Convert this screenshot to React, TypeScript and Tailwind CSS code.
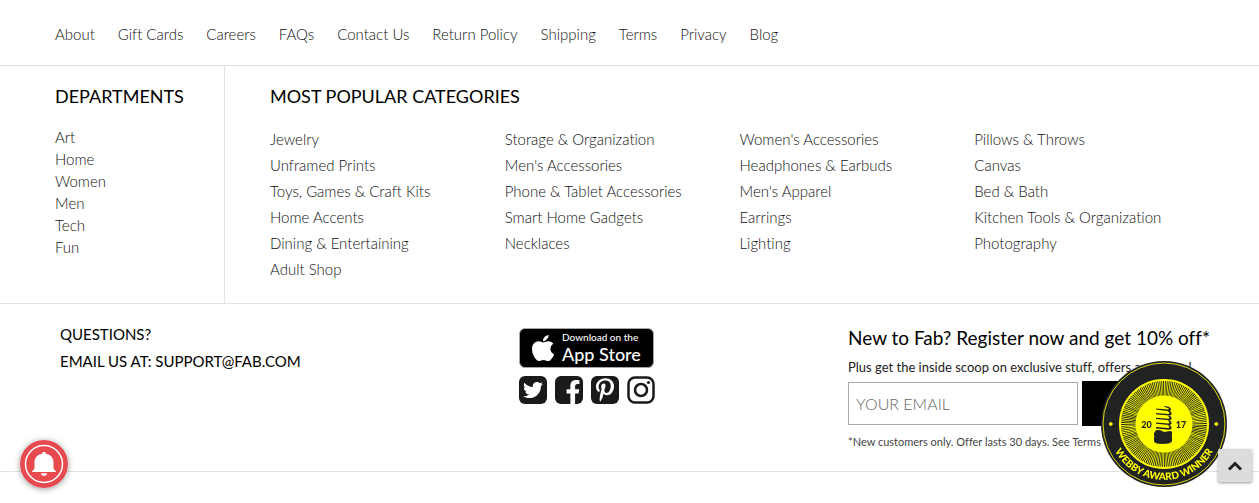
import { FaApple, FaFacebookF, FaPinterestP, FaTwitter } from "react-icons/fa";

const navLinks = ["About", "Gift Cards", "Careers", "FAQs", "Contact Us", "Return Policy", "Shipping", "Terms", "Privacy", "Blog"];

const departments = ["Art", "Home", "Women", "Men", "Tech", "Fun"];

const categories = [
  ["Jewelry", "Unframed Prints", "Toys, Games & Craft Kits", "Home Accents", "Dining & Entertaining", "Adult Shop"],
  ["Storage & Organization", "Men's Accessories", "Phone & Tablet Accessories", "Smart Home Gadgets", "Necklaces"],
  ["Women's Accessories", "Headphones & Earbuds", "Men's Apparel", "Earrings", "Lighting"],
  ["Pillows & Throws", "Canvas", "Bed & Bath", "Kitchen Tools & Organization", "Photography"],
];

function WebbyBadge() {
  return (
    <svg viewBox="-63 -63 126 126" className="block size-[126px]" role="img" aria-label="Webby Award Winner 2017">
      <defs>
        <path id="webby-arc" d="M-56 0A56 56 0 0 0 56 0" />
      </defs>
      <circle r="63" fill="#212322" />
      <circle r="61" fill="none" stroke="#d9d60c" strokeWidth="1" />
      <circle r="44" fill="none" stroke="#ffff00" strokeWidth="2" />
      <circle r="35.500" fill="none" stroke="#ffff00" strokeWidth="15" pathLength="280" strokeDasharray="1 1" />
      <circle r="28.500" fill="#ffff00" />
      <path d="M-55.500 0l2.300-2.300 2.300 2.300-2.300 2.300zM50 0l2.300-2.300 2.300 2.300-2.300 2.300z" fill="#ffff00" />
      <g fill="#212322">
        <path d="M0-17.800c4-.4 7 1 7 3.300-.5 1.500-1.500 2-3.500 1.500L-8-14.500v-1L4-14.500c2-.2 1-2-4-2.600z" />
        <path d="M5-13.500c3.500 1.500 3.500 5 0 5L-8-9.700v-1.200L4-10c2 0 2-1.500 0-2.800z" />
        <path d="M5-8.800c3.500 1.500 3.500 5 0 5L-8-5v-1.300l12 1c2 0 2-1.500 0-2.800z" />
        <path d="M5-4c3.500 1.500 3.500 5 0 5L-8-.2v-1.400L4-.6c2 0 2-1.500 0-2.700z" />
        <path d="M5 .8c3.500 1.500 3.500 5 0 5L-8 4.600V3.100L4 4.100c2 0 2-1.500 0-2.600z" />
        <path d="M-9 8q0-2.500 4-2 3 .5 5 2l6-1q2.500 0 2 3-.5 1.500 0 3v4.500q-2 2.500-9 2.500-8 0-9-2.500V14q.8-1.500 0-3-.5-1.500 1-3z" />
      </g>
      <g fill="#212322" fontFamily="Lato, sans-serif" fontWeight="900" fontSize="9" textAnchor="middle">
        <text x="-17.500" y="3.500">20</text>
        <text x="17" y="3.500">17</text>
      </g>
      <text fill="#ffff00" fontFamily="Lato, sans-serif" fontWeight="900" fontSize="10" textAnchor="middle">
        <textPath href="#webby-arc" startOffset="50%">WEBBY AWARD WINNER</textPath>
      </text>
    </svg>
  );
}

function Bell() {
  return (
    <svg viewBox="0 0 48 48" className="block size-12" aria-hidden="true">
      <circle cx="24" cy="24" r="24" fill="#e64a4f" />
      <circle cx="24" cy="24" r="18.500" fill="none" stroke="#fff" strokeWidth="1.500" />
      <path fill="#fff" d="M24 12c1.200 0 1.900.7 2 1.700 4.800.8 7.500 4.200 7.500 8.800v6.500l2.500 2.200V32H12v-.8l2.500-2.200v-6.500c0-4.600 2.700-8 7.500-8.800.1-1 .8-1.700 2-1.700z" />
      <path fill="#fff" d="M21 33.300h6c-.3 1.700-1.400 2.700-3 2.700s-2.700-1-3-2.700z" />
    </svg>
  );
}

const tile = "flex size-7 overflow-hidden rounded-md bg-[#1a1a1c] text-white";

export default function App() {
  return (
    <div className="min-h-screen overflow-x-hidden bg-white font-['Lato',sans-serif] text-[15px] font-light text-[#111] [font-variant-ligatures:none]">
      <nav className="flex flex-wrap gap-x-[23px] border-b border-[#e2e2e2] px-[55px] pt-[22px] pb-[19px]" aria-label="Footer">
        {navLinks.map((l) => (
          <a key={l} href="#" className="leading-6">{l}</a>
        ))}
      </nav>

      <div className="flex border-b border-[#e2e2e2]">
        <section className="w-[225px] shrink-0 border-r border-[#e2e2e2] pt-4 pl-[55px]">
          <h2 className="text-lg leading-7 font-normal text-black">DEPARTMENTS</h2>
          <ul className="pt-4">
            {departments.map((d) => (
              <li key={d} className="leading-[22px]"><a href="#">{d}</a></li>
            ))}
          </ul>
        </section>
        <section className="flex-1 pt-4 pr-[50px] pb-[21px] pl-[45px]">
          <h2 className="text-lg leading-7 font-normal text-black">MOST POPULAR CATEGORIES</h2>
          <div className="grid grid-cols-4 pt-4">
            {categories.map((col) => (
              <ul key={col[0]}>
                {col.map((c) => (
                  <li key={c} className="leading-[26px] whitespace-nowrap"><a href="#">{c}</a></li>
                ))}
              </ul>
            ))}
          </div>
        </section>
      </div>

      <div className="flex justify-between border-b border-[#e2e2e2] pr-[50px] pl-[60px]">
        <div className="w-[459px] pt-[17px] text-[15px] leading-[27px] font-normal text-black">
          <p>QUESTIONS?</p>
          <p>EMAIL US AT: <a href="mailto:support@fab.com">SUPPORT@FAB.COM</a></p>
        </div>

        <div className="flex-1 pt-6">
          <a href="#" aria-label="Download on the App Store" className="flex h-10 w-[135px] items-center gap-1 rounded-md border border-[#a6a6a6] bg-black pl-2 text-white">
            <FaApple className="size-[30px] shrink-0" />
            <span className="flex flex-col font-medium whitespace-nowrap">
              <span className="text-[10px] leading-3">Download on the</span>
              <span className="text-lg leading-[22px]">App Store</span>
            </span>
          </a>
          <div className="flex gap-2 pt-2">
            <a href="#" aria-label="Twitter" className={tile}><FaTwitter className="m-auto size-5" /></a>
            <a href="#" aria-label="Facebook" className={tile}><FaFacebookF className="mt-auto ml-auto h-6 w-5" /></a>
            <a href="#" aria-label="Pinterest" className={tile}><FaPinterestP className="m-auto size-6" /></a>
            <a href="#" aria-label="Instagram" className="flex size-7 text-[#1a1a1c]">
              <svg viewBox="0 0 28 28" className="size-7" fill="none" stroke="currentColor">
                <rect x="1.500" y="1.500" width="25" height="25" rx="6.500" strokeWidth="2.500" />
                <circle cx="14" cy="14" r="6" strokeWidth="2.500" />
                <circle cx="21.500" cy="6.500" r="1.600" fill="currentColor" stroke="none" />
              </svg>
            </a>
          </div>
        </div>

        <form className="w-[361px] pt-[19px] pb-[19px]" onSubmit={(e) => e.preventDefault()}>
          <h2 className="text-[19px] leading-[30px] font-normal whitespace-nowrap text-black">New to Fab? Register now and get 10% off*</h2>
          <p className="text-[13px] leading-7 font-normal whitespace-nowrap text-[#222]">Plus get the inside scoop on exclusive stuff, offers and more!</p>
          <div className="flex items-center gap-1">
            <input type="email" aria-label="Your email" placeholder="YOUR EMAIL" className="h-[43px] w-[230px] border border-[#a9a9a9] px-[7px] text-base font-light placeholder:text-[#666]" />
            <button type="submit" aria-label="Register" className="h-[45px] flex-1 bg-black" />
          </div>
          <p className="pt-[6px] text-[11px] leading-5 font-normal whitespace-nowrap text-[#444]">*New customers only. Offer lasts 30 days. See <a href="#">Terms</a></p>
        </form>
      </div>

      <div className="fixed right-8 bottom-4"><WebbyBadge /></div>
      <button type="button" aria-label="Back to top" className="fixed right-[7px] bottom-[21px] flex h-[33px] w-[34px] items-center justify-center rounded-xs bg-[#dcdcdc] shadow-[0_1px_3px_rgba(0,0,0,0.4)]">
        <svg viewBox="0 0 16 10" className="h-[10px] w-4" fill="none" stroke="#222" strokeWidth="3"><path d="M2 8.500l6-6 6 6" /></svg>
      </button>
      <button type="button" aria-label="Notifications" className="fixed bottom-[15px] left-5 rounded-full shadow-[0_1px_6px_rgba(0,0,0,0.4)]"><Bell /></button>
    </div>
  );
}
